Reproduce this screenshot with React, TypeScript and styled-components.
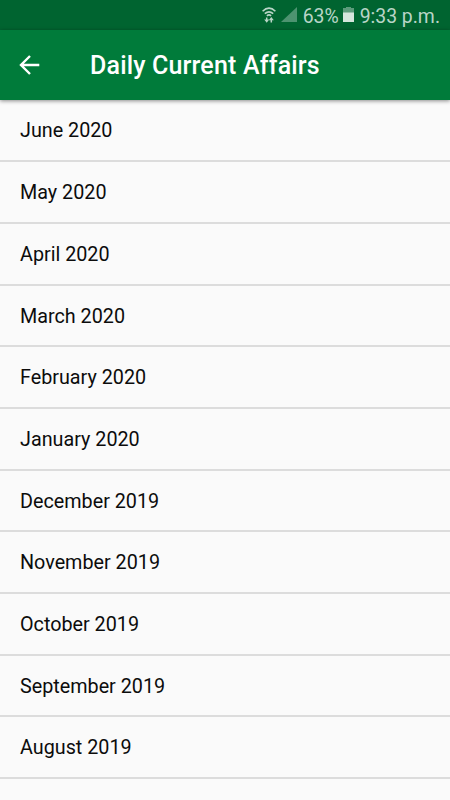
import React from 'react';
import styled, { createGlobalStyle } from 'styled-components';

const Global = createGlobalStyle`
  body { margin: 0; background: #fafafa; font-family: Roboto, sans-serif; }
`;
const Screen = styled.div`
  width: 450px;
  height: 800px;
  overflow: hidden;
  background: #fafafa;
`;
const StatusBar = styled.div`
  height: 30px;
  box-sizing: border-box;
  padding: 2px 10px 0 0;
  display: flex;
  align-items: center;
  justify-content: flex-end;
  background: #006430;
  color: #b9d5c7;
  font-size: 19.4px;
`;
const StatusIcon = styled.svg<{ $gap: number }>`
  display: block;
  flex: none;
  margin-right: ${(p) => p.$gap}px;
  margin-top: -3px;
`;
const Percent = styled.span`
  margin-right: 4px;
`;
const AppBar = styled.header`
  height: 70px;
  display: flex;
  align-items: center;
  background: #007b3a;
  color: #fff;
  box-shadow: 0 1px 4px rgba(0, 0, 0, 0.45);
  position: relative;
`;
const BackButton = styled.button`
  width: 90px;
  height: 70px;
  padding: 0 0 0 19px;
  border: 0;
  background: none;
  color: inherit;
`;
const BackArrow = styled.svg`
  display: block;
`;
const Title = styled.h1`
  margin: 1px 0 0;
  font-size: 25px;
  font-weight: 550;
  letter-spacing: 0.17px;
`;
const List = styled.ul`
  list-style: none;
  margin: 0;
  padding: 0.6px 0 0;
`;
const Row = styled.li`
  height: 61.7px;
  box-sizing: border-box;
  padding: 1px 0 0 20px;
  display: flex;
  align-items: center;
  border-bottom: 2px solid #dcdcdc;
  font-size: 19.75px;
  color: #0c0c0c;
`;

const months = ['June 2020', 'May 2020', 'April 2020', 'March 2020', 'February 2020', 'January 2020', 'December 2019', 'November 2019', 'October 2019', 'September 2019', 'August 2019'];

export default function App() {
  return (
    <Screen>
      <Global />
      <StatusBar>
        <StatusIcon $gap={5} width="14" height="16" viewBox="0 0 14 16" fill="none" stroke="currentColor" strokeWidth="1.6">
          <path d="M.6 4.2Q7-2 13.4 4.2M2.8 6.6q4.2-3.6 8.4 0M4.9 8.8q2.1-1.8 4.2 0" />
          <path d="M4.7 10.5v3M9.3 12.5v3" strokeWidth="1.5" />
          <path d="M2.2 12.6h5L4.7 15.8zM6.8 13.2L9.3 10l2.5 3.2z" fill="currentColor" stroke="none" />
        </StatusIcon>
        <StatusIcon $gap={6} width="16" height="15" viewBox="0 0 16 15">
          <path d="M16 0v15H0z" fill="#4d9370" />
        </StatusIcon>
        <Percent>63%</Percent>
        <StatusIcon $gap={6} width="11" height="15" viewBox="0 0 11 15">
          <path d="M3 0h5v1h3v5H0V1h3z" fill="#5c9b7b" />
          <path d="M0 5.5h11V15H0z" fill="#d5e6dd" />
        </StatusIcon>
        <span>9:33 p.m.</span>
      </StatusBar>
      <AppBar>
        <BackButton aria-label="Back">
          <BackArrow width="21" height="20" viewBox="0 0 21 20" fill="none" stroke="currentColor" strokeWidth="2.4">
            <path d="M20.3 10H2M11 1L2 10l9 9" />
          </BackArrow>
        </BackButton>
        <Title>Daily Current Affairs</Title>
      </AppBar>
      <List>
        {months.map((m) => <Row key={m}>{m}</Row>)}
      </List>
    </Screen>
  );
}
